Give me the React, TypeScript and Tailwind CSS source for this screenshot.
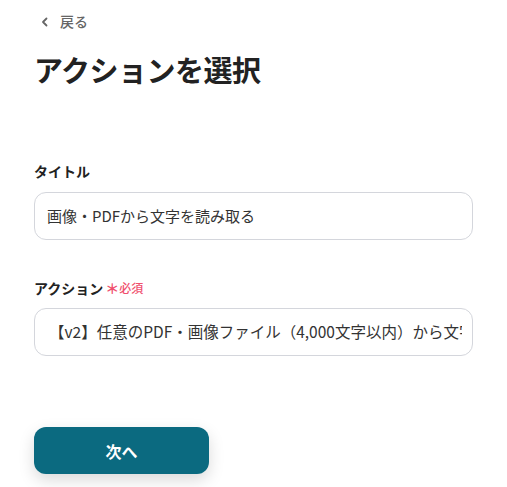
import React from 'react';

const font = { fontFamily: '"Noto Sans CJK JP", "Noto Sans", sans-serif' };

const App = () => {
  return (
    <div className="min-h-screen bg-white text-[#2b2b2b] px-[34px]" style={font}>
      <div className="pt-[16px] h-[27px] flex items-center gap-[9px] text-[14px] font-medium text-[#666]">
        <svg width="12" height="12" viewBox="0 0 12 12" className="ml-[5px]" fill="none">
          <path d="M7.5 2.5 L4 6 L7.5 9.5" stroke="#666" strokeWidth="1.8" strokeLinecap="round" strokeLinejoin="round" />
        </svg>
        <span>戻る</span>
      </div>
      <h1 className="mt-[22px] text-[29px] font-bold leading-[40px] tracking-[-0.5px] text-[#222]">アクションを選択</h1>

      <div className="mt-[71px]">
        <label className="block text-[14px] font-bold leading-[22px] text-[#222]">タイトル</label>
        <div className="mt-[10px] h-[48px] w-[439px] rounded-[12px] border border-[#d4d6dc] flex items-center px-[12px] text-[15px] text-[#333]">
          画像・PDFから文字を読み取る
        </div>
      </div>

      <div className="mt-[37px]">
        <label className="flex items-center gap-[2px] text-[14px] font-bold leading-[22px] text-[#222]">
          アクション
          <span className="flex items-center text-[#f0506e] text-[12px] font-medium">
            <span className="text-[14px] font-bold">＊</span>必須
          </span>
        </label>
        <div className="mt-[9px] h-[48px] w-[439px] rounded-[12px] border border-[#d4d6dc] flex items-center pl-[14px] pr-[10px] text-[15.5px] text-[#333] overflow-hidden">
          <span className="whitespace-nowrap overflow-hidden">【v2】任意のPDF・画像ファイル（4,000文字以内）から文字を読み取る</span>
        </div>
      </div>

      <div className="mt-[71px]">
        <button className="h-[47px] w-[175px] rounded-[12px] bg-[#0b6a80] text-white text-[16px] font-bold shadow-[0_6px_16px_rgba(0,0,0,0.15)]">
          次へ
        </button>
      </div>
    </div>
  );
};

export default App;
